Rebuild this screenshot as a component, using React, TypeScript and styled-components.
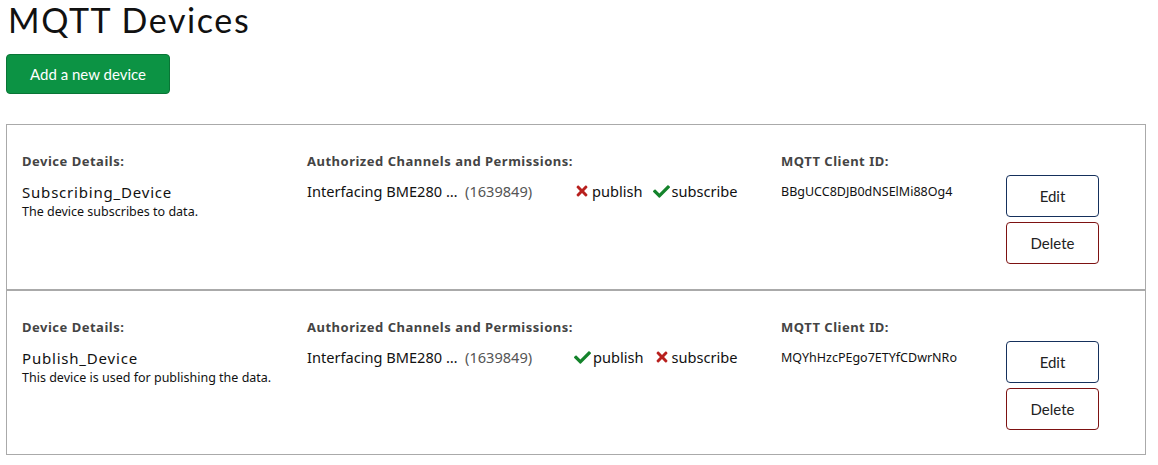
import React from "react";
import styled, { createGlobalStyle } from "styled-components";
import { FaCheck, FaTimes } from "react-icons/fa";

const Global = createGlobalStyle`
  html, body { margin: 0; padding: 0; background: #fff; }
  body { font-family: "Open Sans", "Noto Sans", sans-serif; color: #111; }
`;

const Page = styled.div`
  padding: 0 12px 0 6px;
`;

const Title = styled.h1`
  margin: 0;
  padding: 2px 0 0 2px;
  font-family: "Lato", "Inter", sans-serif;
  font-weight: 400;
  font-size: 34px;
  line-height: 36px;
  letter-spacing: 1.6px;
  color: #111;
`;

const AddButton = styled.button`
  margin-top: 16px;
  width: 164px;
  height: 40px;
  background: #0c9344;
  border: 1px solid #097536;
  border-radius: 4px;
  color: #fff;
  font-family: "Lato", "Inter", sans-serif;
  font-size: 15px;
  padding: 0;
`;

const List = styled.div`
  margin-top: 30px;
  display: flex;
  flex-direction: column;
`;

const Card = styled.div<{ $first?: boolean }>`
  border: 1px solid #aaa;
  border-top-width: ${(p) => (p.$first ? "1px" : "2px")};
  margin-top: ${(p) => (p.$first ? "0" : "-1px")};
  padding: 28px 47px 25px 15px;
  display: grid;
  grid-template-columns: 285px 474px 225px 93px;
  height: 166px;
  box-sizing: border-box;
`;

const Col = styled.div`
  display: flex;
  flex-direction: column;
`;

const Label = styled.div`
  font-family: "Noto Sans", sans-serif;
  font-weight: 700;
  font-size: 13px;
  letter-spacing: 0.5px;
  color: #444;
  line-height: 16px;
`;

const Name = styled.div`
  margin-top: 13px;
  font-family: "Noto Sans", sans-serif;
  font-size: 15px;
  letter-spacing: 0.8px;
  line-height: 20px;
  color: #111;
`;

const Desc = styled.div`
  margin-top: 1px;
  font-family: "Noto Sans", sans-serif;
  font-size: 12.5px;
  line-height: 17px;
  color: #111;
`;

const ChannelRow = styled.div`
  margin-top: 12px;
  display: flex;
  align-items: center;
  font-family: "Noto Sans", sans-serif;
  font-size: 14.6px;
  line-height: 20px;
`;

const ChannelName = styled.span`
  width: 158px;
  white-space: nowrap;
  color: #111;
`;

const ChannelId = styled.span`
  width: 109px;
  color: #555;
`;

const Perm = styled.span`
  display: inline-flex;
  align-items: center;
  gap: 2px;
  margin-right: 10px;
  color: #111;
`;

const Icon = styled.span<{ $ok: boolean }>`
  display: inline-flex;
  color: ${(p) => (p.$ok ? "#14832b" : "#b8201e")};
  font-size: ${(p) => (p.$ok ? "17px" : "16px")};
`;

const ClientId = styled.div`
  margin-top: 14px;
  font-family: "Noto Sans", sans-serif;
  font-size: 12.5px;
  line-height: 17px;
  color: #111;
`;

const Actions = styled.div`
  margin-top: 22px;
  display: flex;
  flex-direction: column;
  gap: 5px;
`;

const ActionButton = styled.button<{ $danger?: boolean }>`
  width: 93px;
  height: 42px;
  background: #fff;
  border: 1px solid ${(p) => (p.$danger ? "#7d1212" : "#15305c")};
  border-radius: 4px;
  font-family: "Lato", "Inter", sans-serif;
  font-size: 15px;
  color: #222;
  padding: 0;
`;

type Device = {
  name: string;
  desc: string;
  publish: boolean;
  subscribe: boolean;
  clientId: string;
};

const devices: Device[] = [
  {
    name: "Subscribing_Device",
    desc: "The device subscribes to data.",
    publish: false,
    subscribe: true,
    clientId: "BBgUCC8DJB0dNSElMi88Og4",
  },
  {
    name: "Publish_Device",
    desc: "This device is used for publishing the data.",
    publish: true,
    subscribe: false,
    clientId: "MQYhHzcPEgo7ETYfCDwrNRo",
  },
];

const PermItem = ({ ok, label }: { ok: boolean; label: string }) => (
  <Perm>
    <Icon $ok={ok}>{ok ? <FaCheck /> : <FaTimes />}</Icon>
    {label}
  </Perm>
);

export default function App() {
  return (
    <Page>
      <Global />
      <Title>MQTT Devices</Title>
      <AddButton>Add a new device</AddButton>
      <List>
        {devices.map((d, i) => (
          <Card key={d.name} $first={i === 0}>
            <Col>
              <Label>Device Details:</Label>
              <Name>{d.name}</Name>
              <Desc>{d.desc}</Desc>
            </Col>
            <Col>
              <Label>Authorized Channels and Permissions:</Label>
              <ChannelRow>
                <ChannelName>Interfacing BME280 …</ChannelName>
                <ChannelId>(1639849)</ChannelId>
                <PermItem ok={d.publish} label="publish" />
                <PermItem ok={d.subscribe} label="subscribe" />
              </ChannelRow>
            </Col>
            <Col>
              <Label>MQTT Client ID:</Label>
              <ClientId>{d.clientId}</ClientId>
            </Col>
            <Actions>
              <ActionButton>Edit</ActionButton>
              <ActionButton $danger>Delete</ActionButton>
            </Actions>
          </Card>
        ))}
      </List>
    </Page>
  );
}
